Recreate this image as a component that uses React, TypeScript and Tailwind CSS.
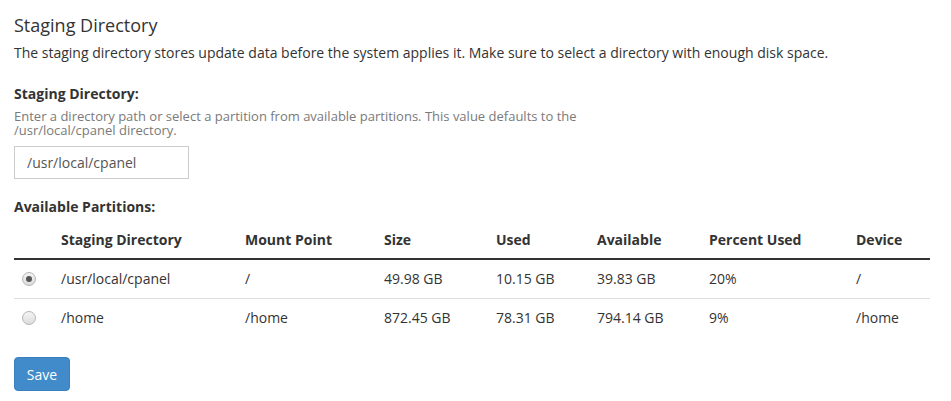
import React from "react";

const rows = [
  {
    dir: "/usr/local/cpanel",
    mount: "/",
    size: "49.98 GB",
    used: "10.15 GB",
    avail: "39.83 GB",
    pct: "20%",
    device: "/",
    checked: true,
  },
  {
    dir: "/home",
    mount: "/home",
    size: "872.45 GB",
    used: "78.31 GB",
    avail: "794.14 GB",
    pct: "9%",
    device: "/home",
    checked: false,
  },
];

const cols = ["w-[39px]", "w-[184px]", "w-[139px]", "w-[112px]", "w-[101px]", "w-[112px]", "w-[147px]", "w-[82px]"];

function Radio({ checked }: { checked: boolean }) {
  return (
    <span className="flex h-[14px] w-[14px] items-center justify-center rounded-full border border-[#b5b5b5] bg-gradient-to-b from-[#f4f4f4] to-[#dcdcdc]">
      {checked && <span className="h-[6px] w-[6px] rounded-full bg-[#555]" />}
    </span>
  );
}

export default function App() {
  const head = ["", "Staging Directory", "Mount Point", "Size", "Used", "Available", "Percent Used", "Device"];
  return (
    <div className="min-h-[401px] w-[951px] bg-white px-[14px] pt-3 text-[#333] font-['Open_Sans',sans-serif]">
      <h1 className="text-[18px] leading-[26px]">Staging Directory</h1>
      <p className="mt-[5px] text-[14px] leading-5">
        The staging directory stores update data before the system applies it. Make sure to select a directory with
        enough disk space.
      </p>

      <label className="mt-[21px] block text-[14px] font-bold leading-5">Staging Directory:</label>
      <p className="mt-[5px] max-w-[580px] text-[13px] leading-[14px] text-[#7a7a7a]">
        Enter a directory path or select a partition from available partitions. This value defaults to the
        /usr/local/cpanel directory.
      </p>
      <input
        readOnly
        value="/usr/local/cpanel"
        className="mt-[9px] block h-[33px] w-[175px] border border-[#ccc] px-3 text-[14px] text-[#555] outline-none"
      />

      <h2 className="mt-[18px] text-[14px] font-bold leading-5">Available Partitions:</h2>

      <div className="w-[916px] text-[14px]">
        <div className="flex border-b-2 border-[#333] pt-[13px] pb-2 font-bold leading-5">
          {head.map((h, i) => (
            <div key={i} className={`${cols[i]} px-2`}>
              {h}
            </div>
          ))}
        </div>
        {rows.map((r, idx) => (
          <div key={r.dir} className={`flex h-[38px] items-center leading-5 ${idx === 0 ? "border-b border-[#ddd] h-[39px]" : ""}`}>
            <div className={`${cols[0]} px-2`}>
              <Radio checked={r.checked} />
            </div>
            <div className={`${cols[1]} px-2`}>{r.dir}</div>
            <div className={`${cols[2]} px-2`}>{r.mount}</div>
            <div className={`${cols[3]} px-2`}>{r.size}</div>
            <div className={`${cols[4]} px-2`}>{r.used}</div>
            <div className={`${cols[5]} px-2`}>{r.avail}</div>
            <div className={`${cols[6]} px-2`}>{r.pct}</div>
            <div className={`${cols[7]} px-2`}>{r.device}</div>
          </div>
        ))}
      </div>

      <button className="mt-5 h-[34px] w-[56px] rounded border border-[#3a7fbf] bg-[#428bca] text-[14px] text-white">
        Save
      </button>
    </div>
  );
}
